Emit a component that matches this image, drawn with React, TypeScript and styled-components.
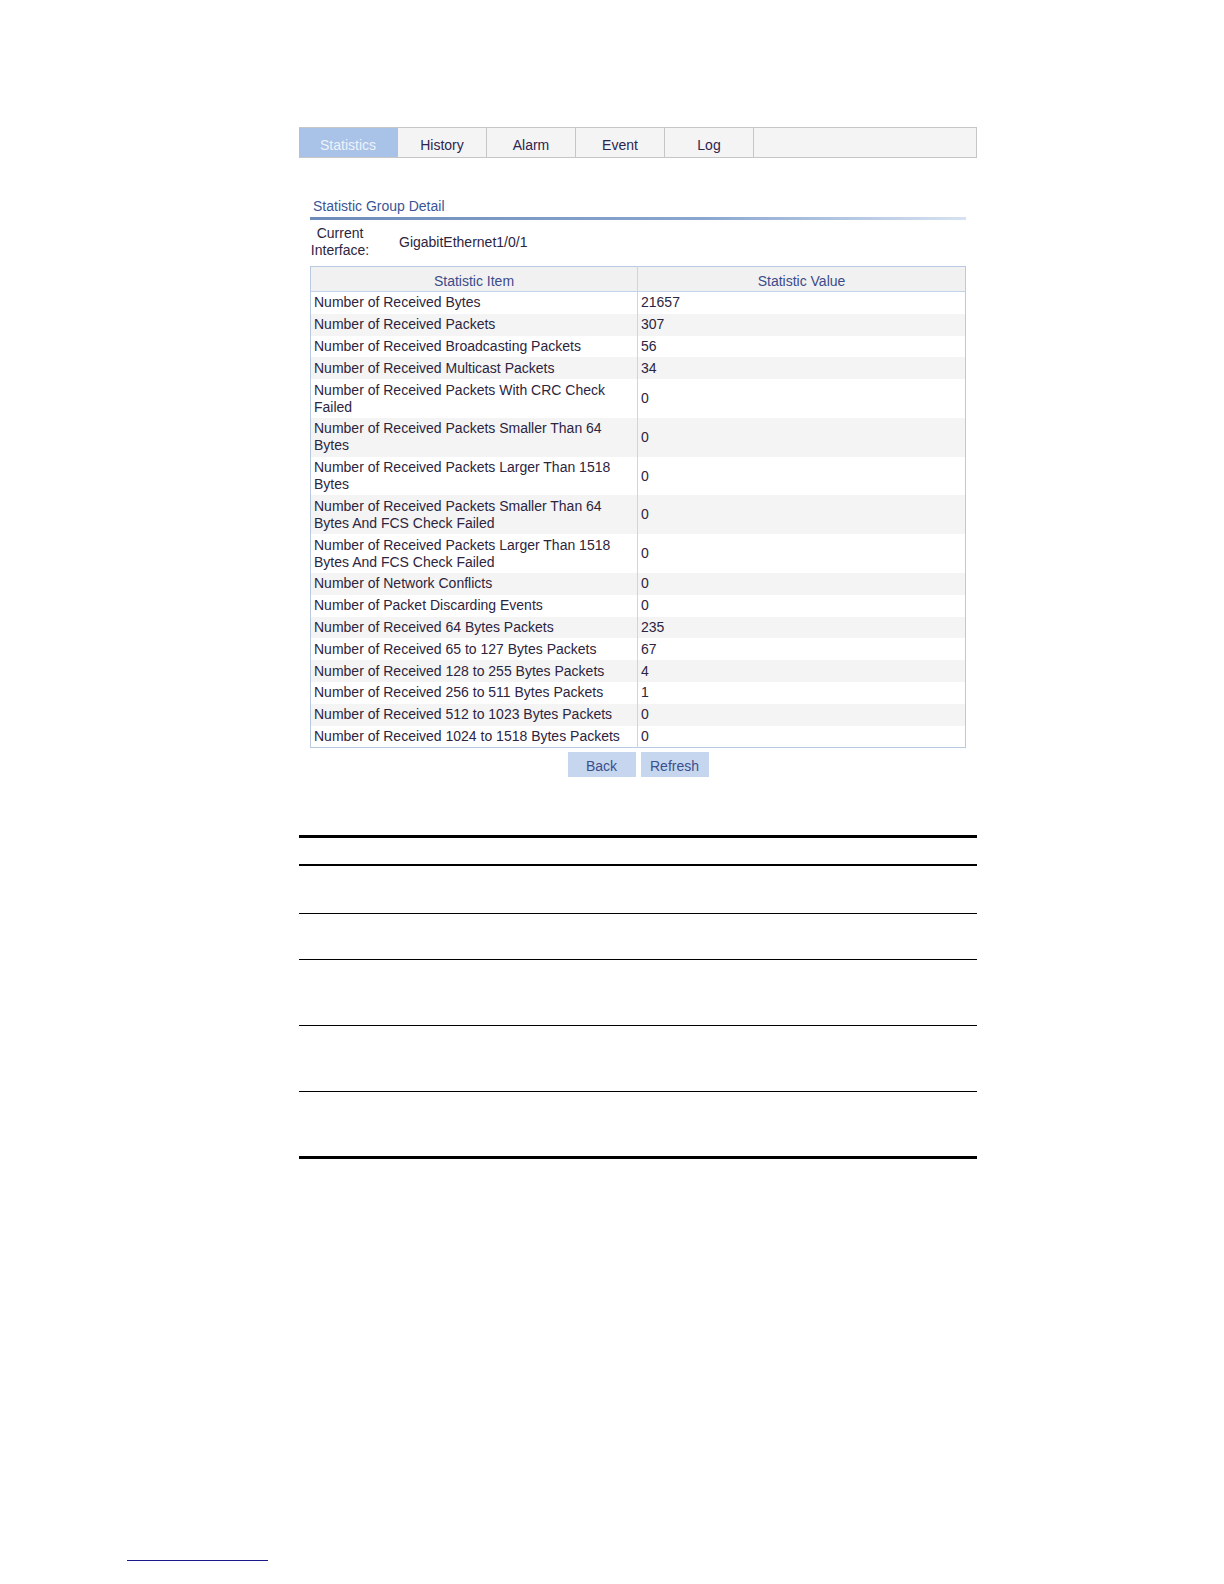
import styled, { createGlobalStyle } from 'styled-components';

const GlobalStyle = createGlobalStyle`
  html, body {
    margin: 0;
    padding: 0;
    background: #ffffff;
    overflow: hidden;
  }
  body {
    font-family: "Liberation Sans", Arial, sans-serif;
    font-size: 14px;
    color: #2d2440;
  }
`;

const rows: [string, string][] = [
  ['Number of Received Bytes', '21657'],
  ['Number of Received Packets', '307'],
  ['Number of Received Broadcasting Packets', '56'],
  ['Number of Received Multicast Packets', '34'],
  ['Number of Received Packets With CRC Check Failed', '0'],
  ['Number of Received Packets Smaller Than 64 Bytes', '0'],
  ['Number of Received Packets Larger Than 1518 Bytes', '0'],
  ['Number of Received Packets Smaller Than 64 Bytes And FCS Check Failed', '0'],
  ['Number of Received Packets Larger Than 1518 Bytes And FCS Check Failed', '0'],
  ['Number of Network Conflicts', '0'],
  ['Number of Packet Discarding Events', '0'],
  ['Number of Received 64 Bytes Packets', '235'],
  ['Number of Received 65 to 127 Bytes Packets', '67'],
  ['Number of Received 128 to 255 Bytes Packets', '4'],
  ['Number of Received 256 to 511 Bytes Packets', '1'],
  ['Number of Received 512 to 1023 Bytes Packets', '0'],
  ['Number of Received 1024 to 1518 Bytes Packets', '0'],
];

const tabs = ['Statistics', 'History', 'Alarm', 'Event', 'Log'];

// heights of the empty rows in the lower rule table
const docRows = [48, 46, 66, 66, 65];

export default function App() {
  return (
    <Sheet>
      <GlobalStyle />
      <Page>
        <TabBar>
          {tabs.map((t, i) => (
            <Tab key={t} active={i === 0}>{t}</Tab>
          ))}
          <TabFill />
        </TabBar>

        <Panel>
          <Title>Statistic Group Detail</Title>
          <TitleRule />
          <InfoRow>
            <InfoLabel>Current<br />Interface:</InfoLabel>
            <InfoValue>GigabitEthernet1/0/1</InfoValue>
          </InfoRow>

          <StatTable>
            <thead>
              <tr>
                <HeadCell>Statistic Item</HeadCell>
                <HeadCell>Statistic Value</HeadCell>
              </tr>
            </thead>
            <tbody>
              {rows.map(([item, value], i) => (
                <StatRow key={item} shaded={i % 2 === 1}>
                  <ItemCell>{item}</ItemCell>
                  <ValueCell>{value}</ValueCell>
                </StatRow>
              ))}
            </tbody>
          </StatTable>

          <Buttons>
            <Button>Back</Button>
            <Button>Refresh</Button>
          </Buttons>
        </Panel>

        <DocTable>
          <tbody>
            <DocHead><td /></DocHead>
            {docRows.map((h, i) => (
              <DocRow key={i} last={i === docRows.length - 1}>
                <td style={{ height: h - 1 }} />
              </DocRow>
            ))}
          </tbody>
        </DocTable>
      </Page>
      <FootLink />
    </Sheet>
  );
}

const Sheet = styled.div`
  width: 1224px;
  height: 1584px;
  overflow: hidden;
`;

const Page = styled.div`
  width: 678px;
  margin-left: 299px;
  padding-top: 127px;
`;

const TabBar = styled.div`
  display: flex;
  height: 29px;
  border-top: 1px solid #c6c6c6;
  border-bottom: 1px solid #c6c6c6;
  border-right: 1px solid #c6c6c6;
  background: #f4f4f4;
`;

const Tab = styled.div<{ active?: boolean }>`
  width: 89px;
  flex: none;
  display: flex;
  align-items: center;
  justify-content: center;
  padding-top: 4px;
  box-sizing: border-box;
  border-right: 1px solid #c6c6c6;
  color: ${p => (p.active ? '#eef3fb' : '#2d2450')};
  background: ${p => (p.active ? '#a8c2e8' : '#f4f4f4')};
  &:first-child {
    width: 99px;
    border-right-color: #a8c2e8;
  }
`;

const TabFill = styled.div`
  flex: 1;
`;

const Panel = styled.div`
  width: 656px;
  margin-left: 11px;
  padding-top: 40px;
`;

const Title = styled.div`
  color: #3a5596;
  padding-left: 3px;
  line-height: 17px;
  height: 19px;
`;

const TitleRule = styled.div`
  height: 3px;
  background: linear-gradient(to right, #6d8cba 0%, #8aa6cf 60%, #d6e2f1 100%);
`;

const InfoRow = styled.div`
  display: flex;
  align-items: center;
  height: 40px;
  padding-top: 3px;
  box-sizing: border-box;
`;

const InfoLabel = styled.div`
  width: 60px;
  text-align: center;
  line-height: 17px;
`;

const InfoValue = styled.div`
  margin-left: 29px;
`;

const StatTable = styled.table`
  width: 656px;
  margin-top: 6px;
  border-collapse: collapse;
  table-layout: fixed;
  border: 1px solid #b9c9e2;
`;

const HeadCell = styled.th`
  height: 25px;
  padding: 4px 0 0;
  box-sizing: border-box;
  font-weight: normal;
  color: #3c4b8a;
  background: #f1f1f1;
  border-bottom: 1px solid #c2d2ea;
  &:first-child {
    width: 327px;
    border-right: 1px solid #d4d4d4;
  }
`;

const StatRow = styled.tr<{ shaded?: boolean }>`
  background: ${p => (p.shaded ? '#f4f4f4' : '#ffffff')};
`;

const ItemCell = styled.td`
  padding: 2.4px 3px;
  line-height: 17px;
  vertical-align: middle;
  border-right: 1px solid #d4d4d4;
`;

const ValueCell = styled.td`
  padding: 2.4px 3px;
  line-height: 17px;
  vertical-align: middle;
`;

const Buttons = styled.div`
  display: flex;
  justify-content: center;
  gap: 5px;
  margin-top: 4px;
`;

const Button = styled.div`
  width: 68px;
  height: 25px;
  display: flex;
  align-items: center;
  justify-content: center;
  padding-top: 2px;
  box-sizing: border-box;
  background: #c6d6ef;
  color: #3a4f8c;
`;

const DocTable = styled.table`
  width: 678px;
  margin-top: 58px;
  border-collapse: collapse;
  border-top: 3px solid #000;
`;

const DocHead = styled.tr`
  td {
    height: 26px;
    padding: 0;
    border-bottom: 2px solid #000;
  }
`;

const DocRow = styled.tr<{ last?: boolean }>`
  td {
    padding: 0;
    border-bottom: ${p => (p.last ? '3px' : '1px')} solid #000;
  }
`;

const FootLink = styled.div`
  width: 141px;
  margin: 401px 0 0 127px;
  border-bottom: 1px solid #1a1a8c;
`;
